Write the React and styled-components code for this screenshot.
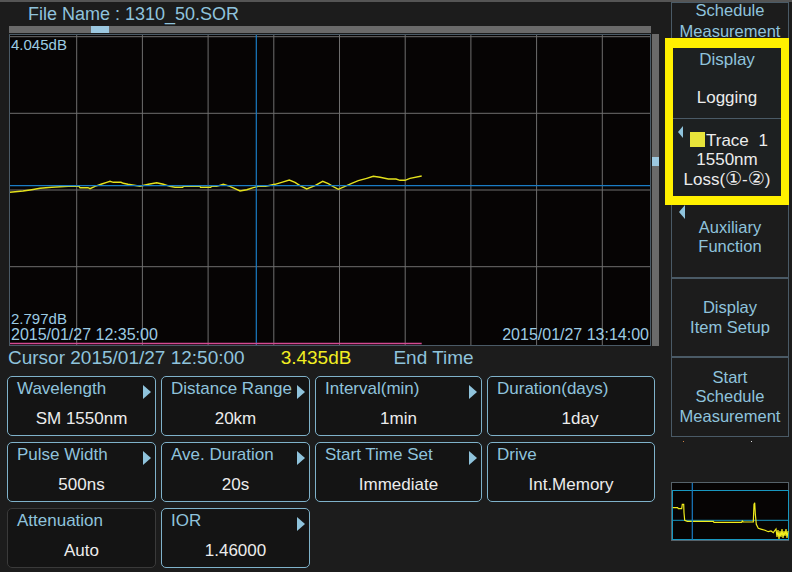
import React from 'react';
import styled, { createGlobalStyle } from 'styled-components';

const BLUE = '#8fc3dc';
const WHITE = '#ececec';
const LINE = '#4a5a66';

const GlobalStyle = createGlobalStyle`
    html, body {
        margin: 0;
        padding: 0;
        background: #1c1c1c;
    }
    body {
        font-family: "Liberation Sans", "DejaVu Sans", sans-serif;
    }
`;

const Screen = styled.div`
    width: 792px;
    height: 572px;
    box-sizing: border-box;
    border-top: 2px solid #555;
    background: #1c1c1c;
    display: flex;
    overflow: hidden;
`;

const Main = styled.div`
    width: 662px;
    display: flex;
    flex-direction: column;
`;

const FileTitle = styled.div`
    height: 24px;
    line-height: 24px;
    padding-left: 28px;
    font-size: 18px;
    color: ${BLUE};
`;

const HScroll = styled.div`
    margin-left: 9px;
    width: 642px;
    height: 7px;
    background: #6a6a6a;
    display: flex;
`;

const Thumb = styled.div`
    background: #9cc8e0;
    width: ${({ $w }) => $w}px;
    height: ${({ $h }) => $h}px;
    margin-left: ${({ $left }) => $left || 0}px;
    margin-top: ${({ $top }) => $top || 0}px;
`;

const GraphRow = styled.div`
    margin-top: 1px;
    margin-left: 9px;
    display: flex;
    gap: 1px;
    height: 312px;
`;

const Graph = styled.div`
    position: relative;
    width: 642px;
    height: 312px;
    box-sizing: border-box;
    border: 1px solid ${LINE};
    background: #060404;
    svg {
        display: block;
    }
`;

const VScroll = styled.div`
    width: 7px;
    height: 312px;
    background: #6a6a6a;
`;

const GraphLabel = styled.div`
    position: absolute;
    font-size: ${({ $size }) => $size || 15}px;
    line-height: ${({ $size }) => $size || 15}px;
    color: #9ccbe3;
    white-space: nowrap;
    ${({ $right }) => ($right ? 'right: 1px;' : 'left: 1px;')}
    top: ${({ $top }) => $top}px;
`;

const CursorRow = styled.div`
    height: 24px;
    line-height: 24px;
    padding-left: 8px;
    font-size: 19px;
    color: ${BLUE};
    display: flex;
    white-space: nowrap;
`;

const CursorValue = styled.span`
    color: #f2ee22;
    margin-left: 36px;
`;

const CursorEnd = styled.span`
    margin-left: 42px;
`;

const ParamGrid = styled.div`
    margin-top: 6px;
    padding-left: 7px;
    display: grid;
    grid-template-columns: 149px 149px 167px 168px;
    grid-auto-rows: 60px;
    column-gap: 5px;
    row-gap: 6px;
`;

const Card = styled.div`
    box-sizing: border-box;
    border: 1px solid ${({ $muted }) => ($muted ? '#3a3a3a' : '#7fb2ca')};
    border-radius: 5px;
    background: #141414;
    padding: 2px 4px 0 9px;
    display: flex;
    flex-direction: column;
`;

const CardHead = styled.div`
    display: flex;
    justify-content: space-between;
    align-items: flex-start;
    font-size: 17px;
    line-height: 20px;
    color: ${BLUE};
    white-space: nowrap;
`;

const Arrow = styled.span`
    margin-top: 6px;
    width: 0;
    height: 0;
    border-left: 8px solid ${BLUE};
    border-top: 7px solid transparent;
    border-bottom: 7px solid transparent;
`;

const CardValue = styled.div`
    margin-top: 10px;
    padding-right: 5px;
    padding-left: ${({ $shift }) => $shift || 0}px;
    font-size: 17px;
    line-height: 20px;
    color: ${WHITE};
    text-align: center;
    white-space: nowrap;
`;

const Side = styled.div`
    width: 130px;
    display: flex;
    flex-direction: column;
`;

const TitleKey = styled.div`
    margin-left: 9px;
    width: 118px;
    height: 36px;
    box-sizing: border-box;
    border: 1px solid ${LINE};
    border-bottom: none;
    text-align: center;
    font-size: 16.5px;
    line-height: 21px;
    color: ${BLUE};
    div {
        margin-top: -3px;
    }
`;

const Highlight = styled.div`
    margin-left: 3px;
    width: 124px;
    height: 167px;
    box-sizing: border-box;
    border-style: solid;
    border-color: #fff000;
    border-width: 10px 8px 9px 8px;
    background: #1d2021;
    display: flex;
    flex-direction: column;
`;

const DisplaySection = styled.div`
    height: 71px;
    border-bottom: 1px solid ${LINE};
    padding-top: 2px;
    box-sizing: border-box;
    text-align: center;
    font-size: 17px;
    line-height: 20px;
`;

const Text = styled.div`
    color: ${({ $white }) => ($white ? WHITE : BLUE)};
    margin-top: ${({ $mt }) => $mt || 0}px;
`;

const TraceSection = styled.div`
    padding-top: 12px;
    font-size: 17px;
    line-height: 19px;
    color: ${WHITE};
    text-align: center;
`;

const TraceRow = styled.div`
    display: flex;
    align-items: flex-start;
    padding-left: 5px;
    word-spacing: 5px;
`;

const LeftMark = styled.span`
    width: 0;
    height: 0;
    border-right: 5px solid ${BLUE};
    border-top: 6px solid transparent;
    border-bottom: 6px solid transparent;
    margin-top: -5px;
    margin-right: 7px;
`;

const TraceSwatch = styled.span`
    width: 15px;
    height: 15px;
    background: #e8e43a;
    margin-top: 1px;
    margin-right: 1px;
`;

const LossLine = styled.div`
    margin-left: -4px;
    margin-right: -4px;
    white-space: nowrap;
    span {
        font-size: 19px;
    }
`;

const KeyBox = styled.div`
    margin-left: 9px;
    width: 118px;
    box-sizing: border-box;
    border: 1px solid ${LINE};
    border-top: none;
    display: flex;
    flex-direction: column;
`;

const Key = styled.div`
    position: relative;
    height: ${({ $h }) => $h}px;
    box-sizing: border-box;
    border-bottom: ${({ $last }) => ($last ? 'none' : `2px solid ${LINE}`)};
    padding-bottom: ${({ $pb }) => $pb || 0}px;
    display: flex;
    align-items: center;
    justify-content: center;
    text-align: center;
    font-size: 16.5px;
    line-height: 19.5px;
    color: ${BLUE};
`;

const KeyMark = styled.span`
    position: absolute;
    left: 7px;
    top: 0;
    width: 0;
    height: 0;
    border-right: 6px solid ${BLUE};
    border-top: 7px solid transparent;
    border-bottom: 7px solid transparent;
`;

const Dots = styled.div`
    height: 2px;
    margin-top: 4px;
    margin-left: 21px;
    display: flex;
    gap: 67px;
`;

const Dot = styled.span`
    width: 1px;
    height: 1px;
    background: ${({ $color }) => $color};
`;

const Minimap = styled.div`
    margin-top: 39px;
    margin-left: 9px;
    width: 118px;
    height: 59px;
    svg {
        display: block;
    }
`;

const trace = [
    [9.3, 192.3], [23, 191], [31.7, 189.7], [40, 188.3], [51.7, 187.3], [68.3, 186.3], [79, 186.3],
    [80, 187.7], [88, 187.7], [90, 188.7], [95, 186.3], [101.7, 184], [106.7, 182.3], [110, 181.3],
    [113.3, 182.3], [121, 182.3], [123.3, 183.3], [128, 184.3], [140, 186.3], [148.3, 184.3],
    [156.7, 182.7], [163.3, 184.3], [170, 186.3], [175, 187.3], [182.7, 187.3], [183.3, 186.3],
    [200, 186.3], [200.5, 187.3], [210.7, 187.3], [211.7, 186.3], [216.7, 186.3], [223.3, 184.3],
    [230, 186.3], [235, 188.7], [240, 191], [246.7, 189.7], [253.3, 187.7], [258.3, 186.3],
    [265.7, 186.3], [275, 184.3], [281.7, 182.3], [289.3, 180], [295, 182.3], [300, 185.7],
    [306.7, 189], [315, 185.7], [322.7, 181.3], [328.3, 183.7], [333.3, 186.7], [338.3, 189.3],
    [345, 186.3], [351.7, 183.3], [358.3, 180.7], [366.7, 178.3], [373.3, 176.3], [380, 177.3],
    [388.3, 179], [396, 179], [400, 180.3], [405, 180.3], [410, 178.3], [421.7, 176],
];

const mini = [
    [672.7, 506.7], [677.7, 506.7], [678.3, 507.7], [681.7, 507.7], [682.3, 503.3], [683.7, 503.3],
    [684, 511.7], [684.7, 519.3], [687.3, 520.3], [713.3, 520.3], [714, 521.3], [741.7, 521.3],
    [742.3, 520], [743.3, 521], [753.3, 521], [754, 503.3], [754.7, 501.7], [755.3, 512.7],
    [756.3, 523.3], [758.3, 527.3], [761.7, 528.3], [765, 529.3], [768.3, 530.7], [771, 530],
    [773.3, 531.7], [776, 528], [777, 536], [778, 529], [779, 538], [780, 530], [781, 536],
    [782, 528], [783, 537], [784, 530], [785, 535], [786, 528], [787, 537], [788, 530],
];

const pts = list => list.map(([x, y]) => `${x},${y}`).join(' ');

const vLines = Array.from({ length: 9 }, (_, i) => 11 + 65.7 * (i + 1));
const hLines = [36.7, 113.3, 190, 266.7];

const TraceChart = () => (
    <svg width="640" height="310" viewBox="10 35 640 310">
        {vLines.map(x => (
            <line key={x} x1={x} y1="35" x2={x} y2="345" stroke="#6e6e6e" strokeWidth="1" />
        ))}
        {hLines.map(y => (
            <line key={y} x1="10" y1={y} x2="650" y2={y} stroke="#6e6e6e" strokeWidth="1" />
        ))}
        <polyline points={pts(trace)} fill="none" stroke="#e4e21c" strokeWidth="1.4" />
        <line x1="10" y1="185.6" x2="650" y2="185.6" stroke="#1a7cc4" strokeWidth="1.2" />
        <line x1="256.3" y1="35" x2="256.3" y2="345" stroke="#1a7cc4" strokeWidth="1.2" />
        <line x1="10" y1="343.5" x2="421.7" y2="343.5" stroke="#d44a92" strokeWidth="1.5" />
    </svg>
);

const MiniChart = () => (
    <svg width="118" height="59" viewBox="671 481 118 59">
        <rect x="671" y="481" width="118" height="59" fill="#060404" />
        <rect x="671.5" y="481.5" width="117" height="58" fill="none" stroke="#56626a" />
        <rect x="672.5" y="489.5" width="116" height="49" fill="none" stroke="#1897c0" />
        <line x1="672" y1="519.3" x2="789" y2="519.3" stroke="#1897c0" />
        <polyline points={pts(mini)} fill="none" stroke="#f0ec1c" strokeWidth="1.2" />
        <line x1="692.3" y1="482" x2="692.3" y2="539" stroke="#1a7cc4" strokeWidth="1.2" />
    </svg>
);

const params = [
    { label: 'Wavelength', value: 'SM 1550nm', arrow: true },
    { label: 'Distance Range', value: '20km', arrow: true },
    { label: 'Interval(min)', value: '1min', arrow: true },
    { label: 'Duration(days)', value: '1day', shift: 18 },
    { label: 'Pulse Width', value: '500ns', arrow: true },
    { label: 'Ave. Duration', value: '20s', arrow: true },
    { label: 'Start Time Set', value: 'Immediate', arrow: true },
    { label: 'Drive', value: 'Int.Memory' },
    { label: 'Attenuation', value: 'Auto', muted: true },
    { label: 'IOR', value: '1.46000', arrow: true },
];

export default function App() {
    return (
        <>
            <GlobalStyle />
            <Screen>
                <Main>
                    <FileTitle>File Name : 1310_50.SOR</FileTitle>
                    <HScroll>
                        <Thumb $w={18} $h={7} $left={82} />
                    </HScroll>
                    <GraphRow>
                        <Graph>
                            <TraceChart />
                            <GraphLabel $top={2}>4.045dB</GraphLabel>
                            <GraphLabel $top={276}>2.797dB</GraphLabel>
                            <GraphLabel $top={292} $size={16}>2015/01/27 12:35:00</GraphLabel>
                            <GraphLabel $top={292} $size={16} $right>2015/01/27 13:14:00</GraphLabel>
                        </Graph>
                        <VScroll>
                            <Thumb $w={7} $h={9} $top={123} />
                        </VScroll>
                    </GraphRow>
                    <CursorRow>
                        <span>Cursor 2015/01/27 12:50:00</span>
                        <CursorValue>3.435dB</CursorValue>
                        <CursorEnd>End Time</CursorEnd>
                    </CursorRow>
                    <ParamGrid>
                        {params.map(p => (
                            <Card key={p.label} $muted={p.muted}>
                                <CardHead>
                                    <span>{p.label}</span>
                                    {p.arrow && <Arrow />}
                                </CardHead>
                                <CardValue $shift={p.shift}>{p.value}</CardValue>
                            </Card>
                        ))}
                    </ParamGrid>
                </Main>
                <Side>
                    <TitleKey>
                        <div>Schedule<br />Measurement</div>
                    </TitleKey>
                    <Highlight>
                        <DisplaySection>
                            <Text>Display</Text>
                            <Text $white $mt={18}>Logging</Text>
                        </DisplaySection>
                        <TraceSection>
                            <TraceRow>
                                <LeftMark />
                                <TraceSwatch />
                                <span>Trace 1</span>
                            </TraceRow>
                            <div>1550nm</div>
                            <LossLine>Loss(<span>①</span>-<span>②</span>)</LossLine>
                        </TraceSection>
                    </Highlight>
                    <KeyBox>
                        <Key $h={74} $pb={8}>
                            <KeyMark />
                            <div>Auxiliary<br />Function</div>
                        </Key>
                        <Key $h={79}>
                            <div>Display<br />Item Setup</div>
                        </Key>
                        <Key $h={78} $last>
                            <div>Start<br />Schedule<br />Measurement</div>
                        </Key>
                    </KeyBox>
                    <Dots>
                        <Dot $color="#d08040" />
                        <Dot $color="#dddddd" />
                    </Dots>
                    <Minimap>
                        <MiniChart />
                    </Minimap>
                </Side>
            </Screen>
        </>
    );
}
